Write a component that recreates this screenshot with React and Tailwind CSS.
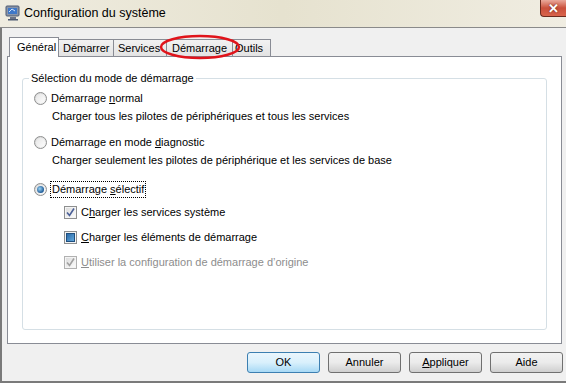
import React from 'react';

const font = { fontFamily: '"Liberation Sans", Arial, sans-serif' };

function Radio({ checked }) {
  return (
    <span className="relative inline-flex w-[13px] h-[13px] shrink-0 rounded-full border border-[#8e8f8f] bg-gradient-to-br from-[#d4d4d4] to-[#f8f8f8] items-center justify-center">
      <span className="w-[9px] h-[9px] rounded-full bg-gradient-to-br from-[#e6e6e6] to-[#fdfdfd] flex items-center justify-center">
        {checked && <span className="w-[7px] h-[7px] rounded-full bg-[radial-gradient(circle_at_40%_40%,#9cd4f5,#1e5a96_70%)]" />}
      </span>
    </span>
  );
}

function Check({ state, disabled }) {
  const border = disabled ? 'border-[#b1b1b1]' : 'border-[#8e8f8f]';
  return (
    <span className={`inline-flex w-[13px] h-[13px] shrink-0 border ${border} bg-[#f4f4f4] items-center justify-center`}>
      <span className={`w-[9px] h-[9px] flex items-center justify-center ${state === 'mixed' ? 'bg-gradient-to-br from-[#2a6aa8] to-[#62a8dc] border border-[#1f4f7e]' : 'bg-gradient-to-br from-[#dcdcdc] to-[#fbfbfb]'}`}>
        {state === 'checked' && (
          <svg width="9" height="9" viewBox="0 0 9 9">
            <path d="M1 4.5 L3.5 7.5 L8 0.5" fill="none" stroke={disabled ? '#a0a0a0' : '#4a5f97'} strokeWidth="1.6" />
          </svg>
        )}
      </span>
    </span>
  );
}

function Btn({ children, primary }) {
  return (
    <div className={`w-[73px] h-[21px] rounded-[3px] border flex items-center justify-center text-[11px] text-black ${primary ? 'border-[#3c7fb1] bg-gradient-to-b from-[#eaf6fd] via-[#d9f0fc] to-[#a7d9f5]' : 'border-[#707070] bg-gradient-to-b from-[#f2f2f2] via-[#ebebeb] to-[#cfcfcf]'}`}>
      {children}
    </div>
  );
}

export default function App() {
  return (
    <div className="w-[566px] h-[383px] relative overflow-hidden bg-[#f0f0f0] text-black" style={font}>
      {/* title bar */}
      <div className="h-[28px] flex items-start border-b border-[#8a8a8a] bg-gradient-to-r from-[#efece0] via-[#e6e2cf] to-[#f0ede2]">
        <svg className="ml-[5px] mt-[5px]" width="16" height="16" viewBox="0 0 16 16">
          <rect x="1" y="1" width="13" height="10" rx="1" fill="#8a95a8" stroke="#4d5a72" />
          <rect x="3" y="3" width="9" height="6" fill="#3f78c8" />
          <path d="M4 7 L7 4 L10 6" fill="none" stroke="#cfe4ff" strokeWidth="1" />
          <rect x="5" y="12" width="6" height="2" fill="#6c7486" />
          <rect x="3" y="14" width="10" height="1.5" fill="#4d5a72" />
        </svg>
        <span className="ml-[3px] mt-[6px] text-[12.5px] leading-[15px] text-black">Configuration du système</span>
        <div className="ml-auto w-[26px] h-[17px] rounded-bl-[4px] border border-t-0 border-r-0 border-[#6b2a1e] bg-gradient-to-b from-[#e9a99c] via-[#c94f3b] to-[#d9644c] flex items-center justify-center">
          <span className="text-white font-bold text-[13px] leading-none [text-shadow:0_0_2px_#5a1a10]">✕</span>
        </div>
      </div>

      {/* body */}
      <div className="h-[355px] border-l-2 border-b-2 border-[#7a7a7a] flex flex-col">
        {/* tabs */}
        <div className="mt-[8px] ml-[7px] flex items-end h-[20px] text-[11px]">
          <div className="h-[20px] w-[50px] bg-white border border-b-0 border-[#898c95] flex items-center pl-[7px] relative z-10 -mb-px pb-px">Général</div>
          <div className="h-[17px] w-[55px] border border-b-0 border-l-0 border-[#898c95] bg-gradient-to-b from-[#f2f2f2] to-[#e3e3e3] flex items-center pl-[4px]">Démarrer</div>
          <div className="h-[17px] w-[53px] border border-b-0 border-l-0 border-[#898c95] bg-gradient-to-b from-[#f2f2f2] to-[#e3e3e3] flex items-center pl-[4px]">Services</div>
          <div className="h-[17px] w-[66px] border border-b-0 border-l-0 border-[#898c95] bg-gradient-to-b from-[#f2f2f2] to-[#e3e3e3] flex items-center pl-[5px]">Démarrage</div>
          <div className="h-[17px] w-[38px] border border-b-0 border-l-0 border-[#898c95] bg-gradient-to-b from-[#f2f2f2] to-[#e3e3e3] flex items-center pl-[2px]">Outils</div>
        </div>

        {/* panel */}
        <div className="ml-[5px] w-[555px] h-[288px] bg-white border border-[#898c95] pt-[21px] px-[14px]">
          <div className="relative h-[252px] border border-[#d5dfe5] rounded-[3px] text-[11px]">
            <span className="absolute -top-[8px] left-[6px] bg-white px-[2px] leading-[15px]">Sélection du mode de démarrage</span>
            <div className="flex flex-col pt-[12px] pl-[11px] leading-[15px]">
              <div className="flex items-center gap-[4px]">
                <Radio />
                <span>Démarrage <u>n</u>ormal</span>
              </div>
              <div className="mt-[3px] pl-[18px]">Charger tous les pilotes de périphériques et tous les services</div>

              <div className="mt-[11px] flex items-center gap-[4px]">
                <Radio />
                <span>Démarrage en mode <u>d</u>iagnostic</span>
              </div>
              <div className="mt-[3px] pl-[18px]">Charger seulement les pilotes de périphérique et les services de base</div>

              <div className="mt-[13px] flex items-center gap-[3px]">
                <Radio checked />
                <span className="border border-dotted border-black px-px">Démarrage <u>s</u>électif</span>
              </div>

              <div className="mt-[7px] ml-[30px] flex items-center gap-[4px]">
                <Check state="checked" />
                <span>C<u>h</u>arger les services système</span>
              </div>
              <div className="mt-[10px] ml-[30px] flex items-center gap-[4px]">
                <Check state="mixed" />
                <span><u>C</u>harger les éléments de démarrage</span>
              </div>
              <div className="mt-[10px] ml-[30px] flex items-center gap-[4px] text-[#8d8d8d]">
                <Check state="checked" disabled />
                <span><u>U</u>tiliser la configuration de démarrage d’origine</span>
              </div>
            </div>
          </div>
        </div>

        {/* buttons */}
        <div className="mt-[8px] flex gap-[8px] justify-end pr-[3px]">
          <Btn primary>OK</Btn>
          <Btn>Annuler</Btn>
          <Btn><span><u>A</u>ppliquer</span></Btn>
          <Btn>Aide</Btn>
        </div>
      </div>

      {/* red annotation ellipse */}
      <svg className="absolute left-[158px] top-[32px] pointer-events-none" width="84" height="30" viewBox="0 0 84 30">
        <ellipse cx="42" cy="15" rx="39" ry="11" fill="none" stroke="#e0141b" strokeWidth="2.5" />
      </svg>
    </div>
  );
}
